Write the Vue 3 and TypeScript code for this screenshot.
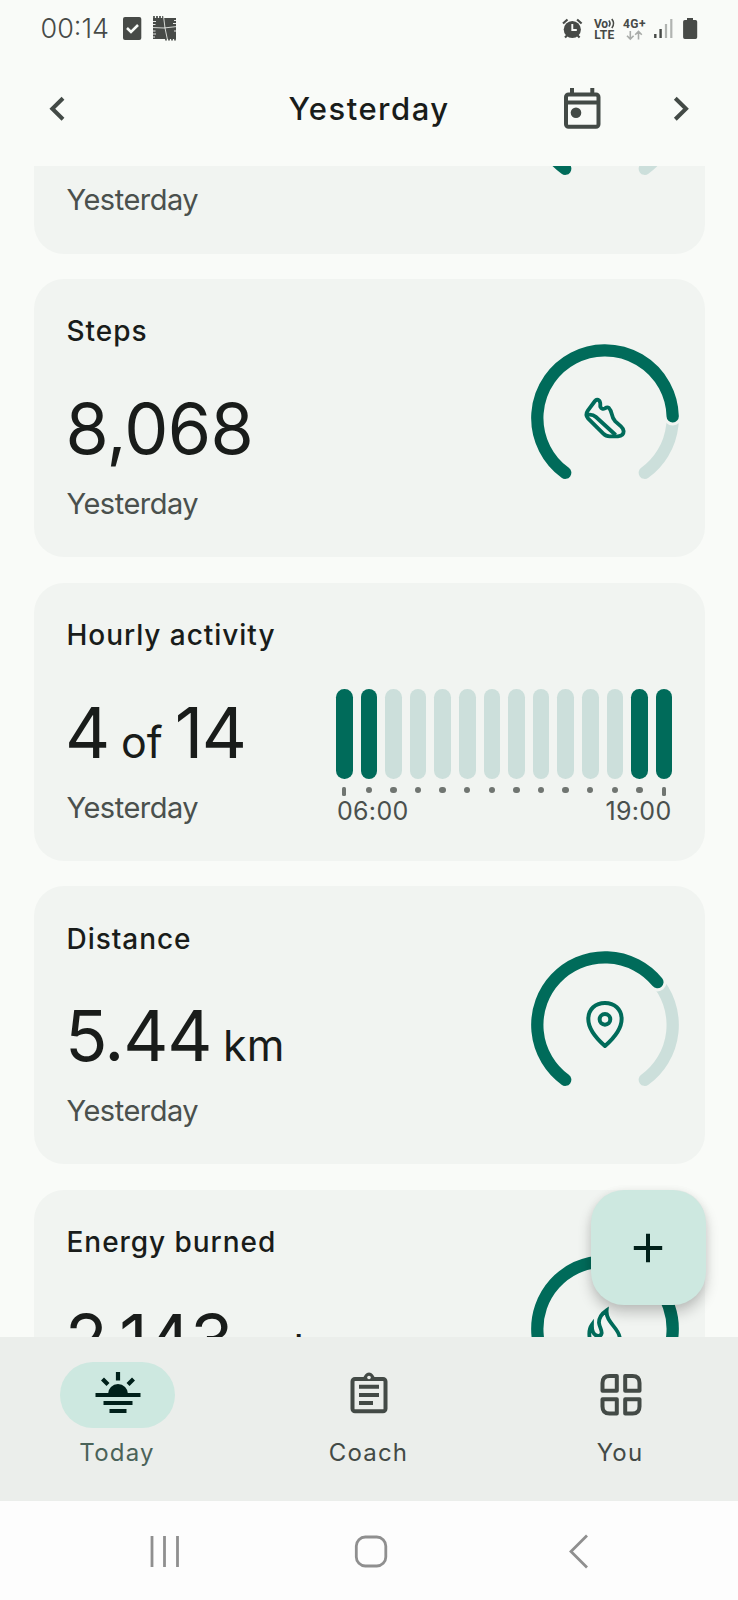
<script setup lang="ts">
interface MetricCard {
  id: string
  title: string
  parts: { text: string; unit?: boolean }[]
  icon?: 'shoe' | 'pin' | 'flame' | 'none'
  end?: number
  hours?: boolean[]
}

const START = -144
const SWEEP_END = 144

const cards: MetricCard[] = [
  { id: 'zone', title: '', parts: [{ text: '' }], icon: 'none', end: 20 },
  { id: 'steps', title: 'Steps', parts: [{ text: '8,068' }], icon: 'shoe', end: 88.5 },
  {
    id: 'hourly',
    title: 'Hourly activity',
    parts: [{ text: '4' }, { text: 'of', unit: true }, { text: '14' }],
    hours: Array.from({ length: 14 }, (_, i) => i < 2 || i > 11),
  },
  { id: 'distance', title: 'Distance', parts: [{ text: '5.44' }, { text: 'km', unit: true }], icon: 'pin', end: 50.7 },
  { id: 'energy', title: 'Energy burned', parts: [{ text: '2,143' }, { text: 'cal', unit: true }], icon: 'flame', end: 144 },
]

function arc(from: number, to: number): string {
  const r = 67.7
  const point = (deg: number) => {
    const a = (deg * Math.PI) / 180
    return `${(74 + r * Math.sin(a)).toFixed(2)} ${(74 - r * Math.cos(a)).toFixed(2)}`
  }
  return `M${point(from)} A${r} ${r} 0 ${to - from > 180 ? 1 : 0} 1 ${point(to)}`
}
</script>

<template>
  <div class="screen">
    <div class="status">
      <span class="clock">00:14</span>
      <svg class="status-left" width="56" height="28" viewBox="121 14 56 28">
        <rect x="123" y="17" width="18.3" height="23" rx="2" fill="#474a47" />
        <path d="M127 28l4 4 7-7" fill="none" stroke="#f9fbf8" stroke-width="2.5" />
        <path d="M153 18H176V39H153Z" fill="#474a47" />
        <path d="M154 18v-2M157 18v-2M160 18v-2M163 18v-2M166 38v2.500M169 38v2.500M172 38v2.500M175 38v2.500" stroke="#474a47" stroke-width="1.700" />
        <path d="M152 21.500h4M152 24.500h3.500M152 31h3.500M152 34h4M152 37h3M174 20.500h3M173 23.500h4M174 31h3" stroke="#f9fbf8" stroke-width=".9" />
        <path d="M152 27.500L164 28 177 26.500M163.500 16l1.500 12 2.500 12" fill="none" stroke="#f9fbf8" stroke-width=".8" />
      </svg>
      <svg class="status-right" width="144" height="30" viewBox="556 14 144 30">
        <g fill="none" stroke="#474a47" stroke-width="2.200">
          <circle cx="572.3" cy="29.500" r="8.600" fill="#474a47" stroke="none" />
          <path d="M563 23.500l4.500-4M581.600 23.500l-4.500-4M565 37.500l3-3M579.600 37.500l-3-3" />
          <path d="M572.300 24v6h4.500" stroke="#f9fbf8" stroke-width="1.900" />
        </g>
        <g fill="#474a47" class="net">
          <text x="594" y="27.500" textLength="14">Vo</text>
          <text x="594.300" y="39.200" textLength="20">LTE</text>
          <text x="623" y="27.700" textLength="22.500">4G+</text>
        </g>
        <path d="M608.800 20.500q2.500 3 0 6M611.800 19q3.500 4.500 0 9" fill="none" stroke="#474a47" stroke-width="1.600" />
        <path d="M630.300 31v8M627 35.800l3.300 3.300 3.300-3.300M638.500 39.500v-8M635.200 34.800l3.300-3.300 3.300 3.300" fill="none" stroke="#a9aca9" stroke-width="1.600" />
        <path d="M655.300 34v4M660.600 29v9" stroke="#474a47" stroke-width="2.400" />
        <path d="M666 24v14M671.300 19v19" stroke="#b1b4b1" stroke-width="2.200" />
        <path d="M687 18h6v2h2.500q1.700 0 1.700 1.700v15.600q0 1.700-1.700 1.700h-10.700q-1.700 0-1.700-1.700v-15.600q0-1.700 1.700-1.700h2.200z" fill="#474a47" />
      </svg>
    </div>

    <header class="topbar">
      <svg width="40" height="44" viewBox="37 87 40 44">
        <path d="M63 98.300L52.300 108.800 63 119.300" fill="none" stroke="#434a46" stroke-width="4" />
      </svg>
      <h1>Yesterday</h1>
      <div class="actions">
        <svg width="40" height="44" viewBox="562 87 40 44">
          <rect x="566" y="94.500" width="32.500" height="32.300" rx="2.500" fill="none" stroke="#434a46" stroke-width="4" />
          <path d="M566 102.500h32.500M572 88v6M592.300 88v6" fill="none" stroke="#434a46" stroke-width="4" />
          <circle cx="576" cy="112.800" r="5.300" fill="#434a46" />
        </svg>
        <svg width="40" height="44" viewBox="661 87 40 44">
          <path d="M675.300 98.300L686 108.800 675.300 119.300" fill="none" stroke="#434a46" stroke-width="4" />
        </svg>
      </div>
    </header>

    <main class="feed">
      <div class="list">
        <section v-for="card in cards" :key="card.id" class="card">
          <div class="text">
            <h2>{{ card.title }}</h2>
            <p class="value" :class="card.id">
              <span v-for="(part, i) in card.parts" :key="i" :class="{ unit: part.unit }">{{ part.text }}</span>
            </p>
            <p class="when">Yesterday</p>
          </div>

          <div v-if="card.hours" class="chart">
            <div class="bars">
              <div v-for="(on, i) in card.hours" :key="i" class="hour">
                <i class="bar" :class="{ on }"></i>
                <i class="tick" :class="{ edge: i === 0 || i === card.hours.length - 1 }"></i>
              </div>
            </div>
            <div class="axis"><span>06:00</span><span>19:00</span></div>
          </div>

          <svg v-else class="ring" width="148" height="148" viewBox="0 0 148 148" fill="none">
            <g stroke-linecap="round" stroke-width="12.300">
              <path :d="arc(START, SWEEP_END)" stroke="#ccdfdb" />
              <path :d="arc(START, card.end ?? 0)" stroke="#f1f4f1" stroke-width="18.500" />
              <path :d="arc(START, card.end ?? 0)" stroke="#006b5a" />
            </g>
            <g v-if="card.icon === 'shoe'" transform="translate(-30.700 -24) scale(.33333)" stroke="#006b5a" stroke-width="11.500" stroke-linejoin="round">
              <path d="M284 243L263 271Q254 284 263 295L309 341Q317 349 328 349H353Q370 348 370 334Q369 325 362 319L345 304Q337 296 335 284Q332 270 326 264Q321 260 314 265Q305 270 300 260Q301 247 297 242Q290 236 284 243Z" />
              <path d="M260 285Q276 281 287 291L346 345" />
            </g>
            <g v-else-if="card.icon === 'pin'" transform="translate(-30.700 -21) scale(.33333)" stroke="#006b5a" stroke-width="12">
              <path d="M314 348C298 334 264 300 264 267C264 237 286 219 314 219C342 219 364 237 364 267C364 300 330 334 314 348Z" stroke-linejoin="round" />
              <circle cx="314" cy="268" r="16" />
            </g>
            <g v-else-if="card.icon === 'flame'" transform="translate(-30.700 -74.700) scale(.33333)" stroke="#006b5a" stroke-width="11.500">
              <path d="M319 390C304 400 296 412 296 427C297 440 305 448 304 459C301 471 285 470 278 455C274 446 275 440 275 433C267 444 265 462 270 482C276 512 294 526 314 526C342 526 362 502 358 470C353 440 316 426 319 390Z" />
            </g>
          </svg>
        </section>
      </div>
      <button class="fab" aria-label="Add">
        <svg width="30" height="30" viewBox="0 0 30 30"><path d="M15 .800v28.400M.800 15h28.400" stroke="#00201a" stroke-width="4" /></svg>
      </button>
    </main>

    <nav class="tabs">
      <a class="tab active">
        <span class="pill">
          <svg width="48" height="46" viewBox="93.500 1370 48 46">
            <path d="M95 1395h45M103 1403h29M109 1411h17" stroke="#00201a" stroke-width="4" />
            <path d="M107.500 1394a10 10 0 0 1 20 0z" fill="#00201a" />
            <path d="M117.500 1372v8.500M102 1379l5.500 5.500M133 1379l-5.500 5.500" stroke="#00201a" stroke-width="4.200" />
          </svg>
        </span>
        <span class="label">Today</span>
      </a>
      <a class="tab">
        <span class="pill">
          <svg width="48" height="46" viewBox="345 1370 48 46">
            <rect x="352.500" y="1379" width="33" height="32.200" rx="2.500" fill="none" stroke="#434a46" stroke-width="4" />
            <path d="M362.500 1380q2-7.500 6.500-7.500t6.500 7.500z" fill="#434a46" />
            <circle cx="369" cy="1377.500" r="1.800" fill="#ebeeeb" />
            <path d="M359 1386.800h20M359 1395h20M359 1403h14" stroke="#434a46" stroke-width="4" />
          </svg>
        </span>
        <span class="label">Coach</span>
      </a>
      <a class="tab">
        <span class="pill">
          <svg width="48" height="46" viewBox="596.500 1370 48 46">
            <g fill="none" stroke="#434a46" stroke-width="4" stroke-linejoin="round">
              <path d="M616.300 1376v14.800H602v-7.800q0-7 7-7z" />
              <path d="M624.700 1376v14.800h14.300v-7.800q0-7-7-7z" />
              <path d="M616.300 1413.500v-14.300H602v7.300q0 7 7 7z" />
              <path d="M624.700 1413.500v-14.300h14.300v7.300q0 7-7 7z" />
            </g>
          </svg>
        </span>
        <span class="label">You</span>
      </a>
    </nav>

    <div class="system">
      <svg width="738" height="40" viewBox="0 1531 738 40" fill="none" stroke="#8f8f8f" stroke-width="2.800">
        <path d="M152 1536v31M164.500 1536v31M177.500 1536v31" />
        <rect x="356.300" y="1537" width="29.500" height="29" rx="9" />
        <path d="M587 1535.500L571 1551.500 587 1567.500" />
      </svg>
    </div>
  </div>
</template>

<style>
body {
  margin: 0;
  background: #f9fbf8;
}
</style>

<style scoped>
.screen {
  width: 738px;
  height: 1600px;
  display: flex;
  flex-direction: column;
  overflow: hidden;
  background: #f9fbf8;
  color: #191c1a;
  font-family: Inter, "Open Sans", sans-serif;
}
svg {
  display: block;
  flex: none;
}
h1,
h2,
p {
  margin: 0;
}
.status {
  height: 56px;
  display: flex;
  align-items: flex-start;
  padding-left: 40.500px;
  box-sizing: border-box;
}
.clock {
  width: 80.500px;
  padding-top: 12.500px;
  font-size: 27px;
  line-height: 32px;
  letter-spacing: 0;
  font-weight: 350;
  color: #474a47;
}
.status-left {
  margin-top: 14px;
}
.status-right {
  margin: 14px 38px 0 auto;
}
.net {
  font: 700 12px Roboto, sans-serif;
}
.topbar {
  height: 110px;
  box-sizing: border-box;
  padding: 31px 37px 0;
  display: grid;
  grid-template-columns: 1fr auto 1fr;
  align-items: start;
}
.topbar h1 {
  font-size: 31px;
  line-height: 44px;
  font-weight: 450;
  letter-spacing: 1.500px;
}
.actions {
  display: flex;
  justify-content: flex-end;
  gap: 59px;
}
.feed {
  position: relative;
  height: 1171px;
  flex: none;
  overflow: hidden;
}
.list {
  margin-top: -190.600px;
  padding: 0 33.500px;
  display: flex;
  flex-direction: column;
  gap: 25.400px;
}
.card {
  height: 278.200px;
  flex: none;
  box-sizing: border-box;
  padding: 34px 26px 0 33px;
  border-radius: 30px;
  background: #f1f4f1;
  display: flex;
  justify-content: space-between;
}
.text {
  padding-top: 0.500px;
  white-space: nowrap;
}
h2 {
  height: 36px;
  font-size: 28px;
  line-height: 36px;
  font-weight: 450;
  letter-spacing: 0.950px;
}
.value {
  height: 84px;
  margin: 37.500px 0 0 -1.500px;
  display: flex;
  align-items: baseline;
  gap: 12px;
  font-size: 70px;
  line-height: 84px;
  letter-spacing: -1.300px;
}
.value.steps {
  margin-left: -1px;
  letter-spacing: -0.700px;
}
.unit {
  font-size: 43px;
  letter-spacing: 0;
}
.when {
  margin-top: 15px;
  font-size: 29px;
  line-height: 36px;
  font-weight: 400;
  letter-spacing: -0.500px;
  color: #4a504d;
}
.ring {
  margin-top: 31px;
}
.chart {
  width: 336.500px;
  margin: 72px 6px 0 0;
}
.bars {
  display: flex;
  justify-content: space-between;
}
.hour {
  width: 16.600px;
  height: 107px;
  display: flex;
  flex-direction: column;
  align-items: center;
}
.bar {
  width: 100%;
  height: 90.500px;
  border-radius: 8.300px;
  background: #ccdfdb;
}
.bar.on {
  background: #006b5a;
}
.tick {
  width: 6.400px;
  height: 6.400px;
  margin-top: 8px;
  border-radius: 50%;
  background: #707571;
}
.tick.edge {
  width: 4.300px;
  height: 8.500px;
  border-radius: 1.500px;
}
.axis {
  display: flex;
  justify-content: space-between;
  padding: 0 1px;
  font-size: 25px;
  line-height: 30px;
  font-weight: 400;
  letter-spacing: 0.300px;
  color: #4a504d;
}
.fab {
  position: absolute;
  left: 590.500px;
  top: 1024px;
  width: 115px;
  height: 115px;
  padding: 0;
  border: 0;
  border-radius: 33px;
  background: #cde8e0;
  box-shadow: 0 8px 14px rgb(0 0 0 / 20%), 0 1px 8px rgb(0 0 0 / 6%);
  display: grid;
  place-items: center;
}
.tabs {
  height: 164px;
  flex: none;
  box-sizing: border-box;
  padding: 25px 60px 0;
  display: flex;
  justify-content: space-between;
  background: #ebeeeb;
}
.tab {
  width: 115px;
  display: flex;
  flex-direction: column;
  align-items: center;
  color: #434a46;
}
.pill {
  width: 115px;
  height: 66px;
  border-radius: 33px;
  box-sizing: border-box;
  padding-top: 8px;
  display: flex;
  justify-content: center;
}
.active .pill {
  background: #cde8e0;
}
.active {
  color: #4a6359;
}
.label {
  margin: 9px 1px 0 0;
  font-size: 24px;
  line-height: 32px;
  font-weight: 430;
  letter-spacing: 1.200px;
}
.system {
  flex: 1;
  padding-top: 30px;
  background: #fdfdfd;
}
</style>
